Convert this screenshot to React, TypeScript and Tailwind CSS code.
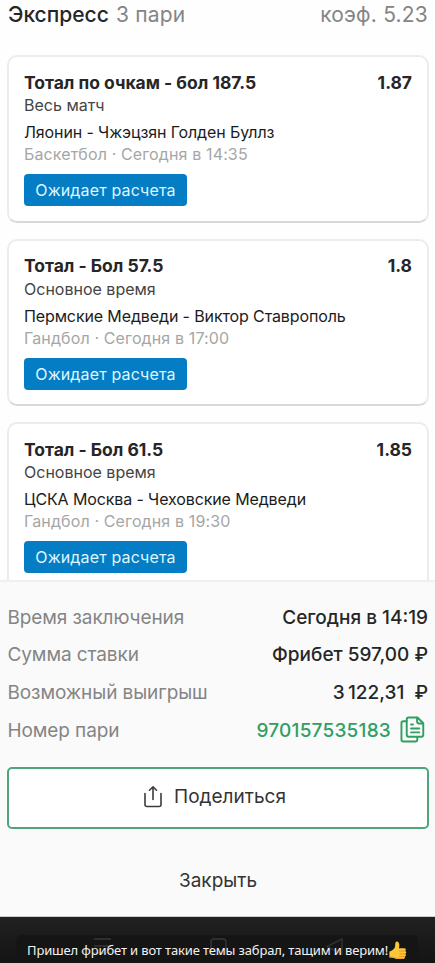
import type { ReactNode } from 'react';

type Bet = {
  title: string;
  period: string;
  match: string;
  meta: string;
  odds: string;
};

const bets: Bet[] = [
  {
    title: 'Тотал по очкам - бол 187.5',
    period: 'Весь матч',
    match: 'Ляонин - Чжэцзян Голден Буллз',
    meta: 'Баскетбол · Сегодня в 14:35',
    odds: '1.87',
  },
  {
    title: 'Тотал - Бол 57.5',
    period: 'Основное время',
    match: 'Пермские Медведи - Виктор Ставрополь',
    meta: 'Гандбол · Сегодня в 17:00',
    odds: '1.8',
  },
  {
    title: 'Тотал - Бол 61.5',
    period: 'Основное время',
    match: 'ЦСКА Москва - Чеховские Медведи',
    meta: 'Гандбол · Сегодня в 19:30',
    odds: '1.85',
  },
];

function BetCard({ bet }: { bet: Bet }) {
  return (
    <div className="h-[167.5px] shrink-0 rounded-[10px] border-2 border-[#ececec] border-b-[#d8d8d8] bg-white px-[15px] pt-[15px] whitespace-nowrap">
      <div className="flex h-[22px] items-center justify-between text-[17.5px] font-bold tracking-[-0.02px] text-[#262626]">
        <span>{bet.title}</span>
        <span>{bet.odds}</span>
      </div>
      <div className="h-[22px] text-[16px] leading-[22px] text-[#444444]">{bet.period}</div>
      <div className="mt-[5px] h-[22px] text-[16px] leading-[22px] tracking-[-0.12px] text-[#1c1c1c]">{bet.match}</div>
      <div className="h-[22px] text-[16px] leading-[22px] tracking-[0.13px] text-[#a6a6a6]">{bet.meta}</div>
      <span className="mt-[9px] inline-flex h-8 w-[163px] items-center justify-center rounded-[4px] bg-[#047dc5] text-[16px] tracking-[0.15px] text-[#dff6ff]">
        Ожидает расчета
      </span>
    </div>
  );
}

function CopyIcon() {
  return (
    <svg width="25" height="27" viewBox="0 0 26 28" fill="none" stroke="#2f9f62" strokeWidth="2" strokeLinejoin="round" strokeLinecap="round">
      <path d="M9 1.500h9.200l6 6v12a2 2 0 0 1-2 2H9a2 2 0 0 1-2-2v-16a2 2 0 0 1 2-2z" />
      <path d="M17.800 1.800v4a2 2 0 0 0 2 2h4" />
      <path d="M6.800 5.500H3.500a2 2 0 0 0-2 2v17a2 2 0 0 0 2 2h12.500a2 2 0 0 0 2-2v-2.500" />
      <path d="M11.500 8.800h2M11.500 13h8.500M11.500 17h8.500" />
    </svg>
  );
}

function ShareIcon() {
  return (
    <svg className="mb-[3px]" width="20" height="23" viewBox="0 0 20 23" fill="none" stroke="#3c3c3c" strokeWidth="1.6" strokeLinecap="round" strokeLinejoin="round">
      <path d="M10 14.500V2M6.500 5.200 10 1.800l3.500 3.400" />
      <path d="M2 8.500v11a2 2 0 0 0 2 2h12a2 2 0 0 0 2-2v-11" />
    </svg>
  );
}

function ThumbIcon() {
  return (
    <svg className="ml-px" width="18" height="19" viewBox="0 0 18 19">
      <path d="M.4 10.500c2.300-.8 4.300-2.100 5.200-3.600C6.500 5.300 6 3.300 6.500 1.600 6.900.2 8.900.2 9.700 1.700c.9 1.700.8 3.600.2 5.500h5.300c1.700 0 2.300 2 .9 2.800 1.500.4 1.500 2.400.1 2.900 1.100.6.900 2.300-.5 2.700.7 1 .1 2.200-1.400 2.300-3.300.3-6.500.2-8.700-.7-1.700-.7-3.400-.8-5.200-.8z" fill="#fdc739" />
      <path d="M10.500 10h5.300M10.800 12.900h5M10.800 15.600h4.500" stroke="#dd8b12" strokeWidth=".8" strokeLinecap="round" />
      <path d="M.4 15.800c1.800.1 3.500.2 5.200.9 2.200.9 5.400 1.100 8.700.7" stroke="#e59a1a" strokeWidth=".9" fill="none" />
    </svg>
  );
}

function Row({ label, children }: { label: string; children: ReactNode }) {
  return (
    <div className="flex h-[37.8px] items-center justify-between whitespace-nowrap">
      <span className="pl-[0.5px] text-[19px] tracking-[-0.1px] text-[#858585]">{label}</span>
      {children}
    </div>
  );
}

export default function App() {
  return (
    <div className="flex h-[963px] w-[435px] flex-col overflow-hidden bg-[#fefefe] font-['Inter','Liberation_Sans',sans-serif]">
      <header className="flex h-[55px] shrink-0 items-start justify-between pt-px pr-[7px] pl-2 text-[21px] leading-[28px] tracking-[0.2px] whitespace-nowrap text-[#858585]">
        <span>
          <span className="mr-px font-medium tracking-normal text-[#262626]">Экспресс</span> 3 пари
        </span>
        <span>коэф. 5.23</span>
      </header>

      <main className="flex h-[525px] shrink-0 flex-col gap-4 overflow-hidden pr-1.5 pl-[7px]">
        {bets.map((bet) => (
          <BetCard key={bet.match} bet={bet} />
        ))}
      </main>

      <section className="flex h-[337px] shrink-0 flex-col border-t-2 border-b border-t-[#f0f0f0] border-b-[#cccccc] bg-[#fafafa] pt-[17px] pr-1.5 pl-[7px]">
        <Row label="Время заключения">
          <span className="pr-px text-[19px] font-medium text-[#262626]">Сегодня в 14:19</span>
        </Row>
        <Row label="Сумма ставки">
          <span className="pr-px text-[19px] font-medium text-[#262626]">Фрибет 597,00 ₽</span>
        </Row>
        <Row label="Возможный выигрыш">
          <span className="pr-px text-[19px] font-medium text-[#262626]">3&#8201;122,31&nbsp; ₽</span>
        </Row>
        <Row label="Номер пари">
          <span className="flex items-center gap-[9px] pr-1 text-[19px] font-medium tracking-[0.22px] text-[#2f9f62]">
            970157535183
            <span className="-mt-[3px]">
              <CopyIcon />
            </span>
          </span>
        </Row>
        <button className="mt-[17px] flex h-[62px] shrink-0 items-center justify-center gap-[11px] rounded-[5px] border-2 border-[#4fa57b] bg-white pr-[7px] pb-px text-[19px] text-[#333333]">
          <ShareIcon />
          <span>Поделиться</span>
        </button>
        <button className="mt-9 h-8 text-[19px] leading-8 text-[#333333]">Закрыть</button>
      </section>

      <footer className="relative flex flex-1 items-end bg-linear-to-b from-[#212121] to-[#141414] px-4">
        <p className="flex h-7 w-[402px] items-center rounded-t-[6px] bg-[#151515] pt-[3px] pl-[11px] font-['Noto_Sans','Open_Sans',sans-serif] text-[13px] tracking-[-0.145px] whitespace-nowrap text-[#f2f2f2]">
          Пришел фрибет и вот такие темы забрал, тащим и верим!
          <ThumbIcon />
        </p>
        {/* dimmed navigation icons behind the caption */}
        <svg className="pointer-events-none absolute top-0 left-0" width="435" height="46" fill="none" stroke="#ffffff" strokeOpacity=".11" strokeWidth="1.8">
          <path d="M94 22h17M94 29h17M94 36h17" />
          <rect x="211" y="22" width="15" height="15" rx="3" />
          <path d="M342 22v15l-15-7.500z" strokeLinejoin="round" />
        </svg>
      </footer>
    </div>
  );
}
